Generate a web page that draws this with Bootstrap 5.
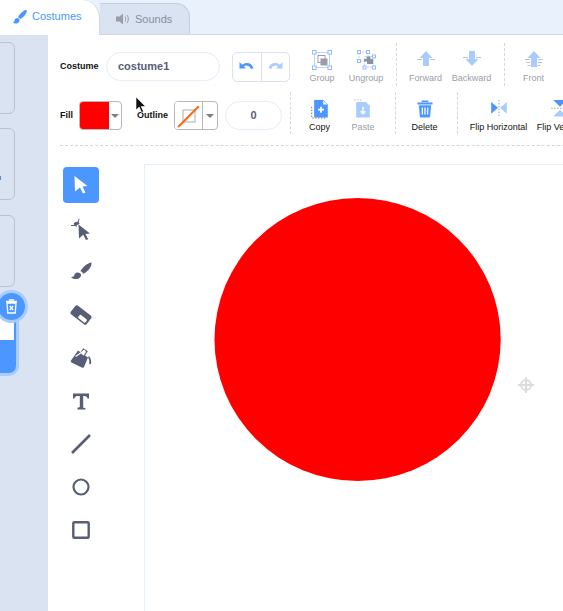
<!DOCTYPE html>
<html lang="en">
<head>
<meta charset="UTF-8">
<meta name="viewport" content="width=device-width, initial-scale=1.0">
<title>Paint editor</title>
<link rel="stylesheet" href="https://cdn.jsdelivr.net/npm/bootstrap@5.3.0/dist/css/bootstrap.min.css">
<style>
    html, body { height: 100%; }
    body { background: #e9f1fc; font-family: "Liberation Sans", Arial, sans-serif; overflow: hidden; position: relative; color: #575e75; }
    .tab-strip { height: 35px; border-bottom: 1px solid #cfd6e2; }
    .tab-item { font-size: 11px; display: flex; align-items: center; gap: 5px; }
    .tab-on { width: 100px; height: 35px; background: #fff; color: #4c97ff; padding: 0 0 2px 13px; border-right: 1px solid #cfd6e2; margin-bottom: -1px; font-weight: 500; border-radius: 0 18px 0 0; }
    .tab-off { width: 90px; height: 31px; margin-top: 3px; background: #d9e3f2; color: #8a8f9c; padding-left: 16px; border: 1px solid #c6cede; border-left: 0; border-bottom: 0; border-radius: 0 14px 0 0; }
    .editor-body { height: 576px; }
    .sprite-rail { width: 48px; background: #d9e3f2; padding-top: 7px; flex: none; overflow: hidden; position: relative; }
    .sprite-box { width: 30px; height: 72px; margin-left: -15px; margin-bottom: 14px; border: 1px solid #bcc3cf; border-radius: 6px; position: relative; }
    .sprite-box + .sprite-box { margin-bottom: 15px; }
    .sprite-box i { position: absolute; right: 13px; top: 47px; width: 2px; height: 4px; background: #5c8fc9; }
    .sprite-sel { width: 31px; height: 73px; margin-left: -15px; margin-top: -2px; background: #4c97ff; border-radius: 7px; box-shadow: 0 0 0 3px #a9ccff; position: relative; }
    .sprite-sel div { height: 40px; background: #fff; margin: 0 2px 0 0; }
    .trash-badge { position: absolute; left: -2px; top: 258px; width: 27px; height: 27px; border-radius: 50%; background: #4c97ff; box-shadow: 0 0 0 3px #a9ccff; display: flex; align-items: center; justify-content: center; }
    .editor-main { background: #fff; flex: 1; min-width: 0; overflow: hidden; padding: 16px 0 0 12px; }
    .bar-row { height: 31px; white-space: nowrap; width: 560px; }
    .bar-row > * { flex: none; }
    .row-low { margin-top: 19px; height: 29px; }
    .bar-label { font-size: 9px; font-weight: 700; color: #111; }
    .lbl-costume { width: 40px; }
    .lbl-fill { width: 19px; }
    .lbl-outline { width: 37px; margin-left: 15px; }
    .name-field { width: 114px; height: 29px; margin-left: 6px; border: 1px solid #e5edf8; border-radius: 15px; font-size: 11px; font-weight: 700; color: #575e75; padding-left: 11px; display: flex; align-items: center; }
    .undo-pair { width: 58px; height: 30px; margin-left: 12px; border: 1px solid #dde3ec; border-radius: 5px; }
    .undo-pair span { flex: 1; display: flex; align-items: center; justify-content: center; }
    .undo-pair span + span { border-left: 1px solid #dde3ec; }
    .cell-btn { font-size: 9px; color: #9a9ea8; display: flex; flex-direction: column; align-items: center; height: 40px; }
    .cell-btn svg { height: 20px; }
    .cell-dark { color: #111; }
    .cell-gap { width: 0; border-left: 1px dashed #d4d7dc; }
    .row-top .cell-btn { margin-top: -1px; }
    .row-top .cell-btn svg { margin-top: 4px; margin-bottom: 2px; }
    .row-low .cell-btn { margin-top: -3px; }
    .row-low .cell-btn svg { margin-top: 5px; margin-bottom: 2px; }
    .row-low .cell-gap { margin-top: -5px; height: 42px; }
    .row-top .cell-gap { margin-top: -5px; height: 43px; }
    .at-group { margin-left: 19px; width: 26px; }
    .at-ungroup { margin-left: 13px; width: 36px; }
    .at-gap-a { margin-left: 12px; }
    .at-forward { margin-left: 11.5px; width: 34px; }
    .at-backward { margin-left: 8.5px; width: 41px; }
    .at-gap-b { margin-left: 11.5px; }
    .at-front { margin-left: 17px; width: 24px; }
    .at-gap-c { margin-left: 8px; }
    .at-copy { margin-left: 18px; width: 21px; }
    .at-paste { margin-left: 21px; width: 24px; }
    .at-gap-d { margin-left: 20px; }
    .at-delete { margin-left: 15.5px; width: 26px; }
    .at-gap-e { margin-left: 19.5px; }
    .at-fliph { margin-left: 11.5px; width: 58px; }
    .at-flipv { margin-left: 9.5px; width: 46px; }
    .swatch-pick { width: 43px; height: 29px; border: 1px solid #b8b8b8; border-radius: 4px; overflow: hidden; }
    .swatch-wide { width: 44px; }
    .swatch-main { width: 29px; background: #f00; }
    .swatch-line { width: 28px; background: #fff; display: flex; align-items: center; justify-content: center; border-right: 1px solid #b8b8b8; }
    .swatch-drop { flex: 1; display: flex; align-items: center; justify-content: center; }
    .width-field { width: 57px; height: 29px; margin-left: 7px; border: 1px solid #e5edf8; border-radius: 15px; font-size: 11px; font-weight: 700; color: #575e75; display: flex; align-items: center; justify-content: center; }
    .bar-rule { width: 560px; border-top: 1px dashed #d4d7dc; margin-top: 15px; }
    .paint-area { margin-top: 18px; }
    .tool-col { width: 36px; margin: 3px 0 0 3px; flex: none; }
    .tool-btn { width: 36px; height: 36px; border-radius: 4px; display: flex; align-items: center; justify-content: center; margin-bottom: 7px; }
    .tool-sel { background: #4c97ff; margin-bottom: 8px; }
    .paint-canvas { margin-left: 45px; border-top: 1px solid #e6eef8; border-left: 1px solid #e6eef8; width: 420px; height: 447px; flex: none; }
    .paint-canvas svg { display: block; }
    .mouse-arrow { position: absolute; left: 135px; top: 96px; }
</style>
</head>
<body>
    <div class="tab-strip d-flex">
        <div class="tab-item tab-on">
            <svg width="14" height="14" viewBox="0 0 14 14"><path d="M13.6.4c-.6-.5-1.600-.4-2.500.2C8.500 2.300 6.300 4.800 5 7.300c1 .2 1.800 1 2 2 2.500-1.300 5.200-3.900 6.400-6.500.4-.9.6-1.800.2-2.400zM4.200 8C2.600 8 1.700 9.200 1.500 10.500 1.300 11.600.8 12 0 12.300c1 1.300 3.300 1.700 5 .6 1.300-.8 1.800-2.100 1.400-3.300C6.100 8.600 5.200 8 4.200 8z" fill="#4c97ff"/></svg>
            <span>Costumes</span>
        </div>
        <div class="tab-item tab-off">
            <svg width="14" height="12" viewBox="0 0 14 12"><path d="M0 3.500h3.500l3.500-3v11l-3.500-3H0z" fill="#9a9ea8"/><path d="M9 3.500c1 1.300 1 3.700 0 5M11 2c1.800 2.200 1.800 5.800 0 8" stroke="#9a9ea8" stroke-width="1" fill="none"/></svg>
            <span>Sounds</span>
        </div>
    </div>
    <div class="editor-body d-flex">
        <div class="sprite-rail">
            <div class="sprite-box"></div>
            <div class="sprite-box"><i></i></div>
            <div class="sprite-box"></div>
            <div class="sprite-sel"><div></div></div>
            <div class="trash-badge">
                <svg width="13" height="15" viewBox="0 0 13 15"><path d="M4.500 1.500V.8h4v.7M1 2.500h11M2 4l.8 10h7.400L11 4z" stroke="#fff" stroke-width="1.300" fill="none"/><path d="M4.800 7l3.400 4M8.200 7l-3.400 4" stroke="#fff" stroke-width="1.200"/></svg>
            </div>
        </div>
        <div class="editor-main">
            <div class="bar-row row-top d-flex align-items-center">
                <span class="bar-label lbl-costume">Costume</span>
                <div class="name-field">costume1</div>
                <div class="undo-pair d-flex">
                    <span><svg width="15" height="11" viewBox="0 0 15 11"><path d="M.5 1v6.500h6.500L4.800 5.300C7 3.800 10.500 4.500 12 8l2.500-.8C13 2 7.500.4 3.200 3.700z" fill="#4c97ff"/></svg></span>
                    <span><svg width="15" height="11" viewBox="0 0 15 11"><path d="M14.500 1v6.500H8l2.200-2.200C8 3.800 4.500 4.500 3 8L.5 7.200C2 2 7.500.4 11.800 3.700z" fill="#a9ccff"/></svg></span>
                </div>
                <div class="cell-btn at-group">
                    <svg width="20" height="20" viewBox="0 0 20 20"><rect x="2.500" y="2.500" width="15" height="15" fill="none" stroke="#b9d5ff"/><g fill="#fff" stroke="#8fbcff"><rect x=".5" y=".5" width="3.500" height="3.500"/><rect x="16" y=".5" width="3.500" height="3.500"/><rect x=".5" y="16" width="3.500" height="3.500"/><rect x="16" y="16" width="3.500" height="3.500"/></g><rect x="6" y="5.500" width="7" height="7" fill="#fff" stroke="#9a9ea8"/><rect x="8.500" y="8.500" width="7" height="7" fill="#9a9ea8"/></svg>
                    Group
                </div>
                <div class="cell-btn at-ungroup">
                    <svg width="19" height="20" viewBox="0 0 19 20"><rect x="2" y="2" width="9" height="9" fill="none" stroke="#b9d5ff" stroke-dasharray="2 1"/><rect x="7.500" y="6.500" width="9" height="10.500" fill="none" stroke="#b9d5ff" stroke-dasharray="2 1"/><g fill="#fff" stroke="#8fbcff"><rect x=".5" y=".5" width="3" height="3"/><rect x="9.500" y=".5" width="3" height="3"/><rect x=".5" y="9.500" width="3" height="3"/><rect x="15.500" y="5" width="3" height="3"/><rect x="15.500" y="16" width="3" height="3"/><rect x="6" y="16" width="3" height="3"/></g><path d="M9.500 6.500h4v2.500h2.500v5h-6v-2.500H7V9h2.500z" fill="#8e929c"/></svg>
                    Ungroup
                </div>
                <div class="cell-gap at-gap-a"></div>
                <div class="cell-btn at-forward">
                    <svg width="20" height="20" viewBox="0 0 20 20"><path d="M10 1l6.500 7H13v8H7V8H3.500z" fill="#a9ccff"/><path d="M1 9.500h5M14 9.500h5" stroke="#bcc1ca" stroke-width="1.200"/></svg>
                    Forward
                </div>
                <div class="cell-btn at-backward">
                    <svg width="20" height="20" viewBox="0 0 20 20"><path d="M10 16l6.500-7H13V1H7v8H3.500z" fill="#a9ccff"/><path d="M1 7.500h5M14 7.500h5" stroke="#bcc1ca" stroke-width="1.200"/></svg>
                    Backward
                </div>
                <div class="cell-gap at-gap-b"></div>
                <div class="cell-btn at-front">
                    <svg width="20" height="20" viewBox="0 0 20 20"><path d="M10 1l6.500 7H13v9H7V8H3.500z" fill="#a9ccff"/><path d="M1 9.500h5M14 9.500h5M2 12.500h4M14 12.500h4M3.500 15.500h3M13.500 15.500h3" stroke="#bcc1ca" stroke-width="1.100"/></svg>
                    Front
                </div>
            </div>
            <div class="bar-row row-low d-flex align-items-center">
                <span class="bar-label lbl-fill">Fill</span>
                <div class="swatch-pick d-flex">
                    <div class="swatch-main"></div>
                    <div class="swatch-drop"><svg width="8" height="4" viewBox="0 0 8 4"><path d="M0 0h8L4 4z" fill="#7c7f88"/></svg></div>
                </div>
                <span class="bar-label lbl-outline">Outline</span>
                <div class="swatch-pick swatch-wide d-flex">
                    <div class="swatch-line"><svg width="24" height="24" viewBox="0 0 22 22"><rect x="5.500" y="5.500" width="11" height="11" fill="#fff" stroke="#b5b5b5"/><path d="M1 21L20 2" stroke="#ff6a1a" stroke-width="2"/></svg></div>
                    <div class="swatch-drop"><svg width="8" height="4" viewBox="0 0 8 4"><path d="M0 0h8L4 4z" fill="#7c7f88"/></svg></div>
                </div>
                <div class="width-field">0</div>
                <div class="cell-gap at-gap-c"></div>
                <div class="cell-btn cell-dark at-copy">
                    <svg width="20" height="20" viewBox="0 0 20 20"><path d="M4 1h9l5 5v13H4z" fill="#4c97ff"/><path d="M13 1l5 5h-5z" fill="#fff" stroke="#4c97ff" stroke-width=".5"/><path d="M8 11h6M11 8v6" stroke="#fff" stroke-width="1.800"/><path d="M1.500 8v11.500H16" stroke="#777" stroke-dasharray="1.500 1.500" fill="none"/></svg>
                    Copy
                </div>
                <div class="cell-btn at-paste">
                    <svg width="20" height="20" viewBox="0 0 20 20"><path d="M3 3h10l4 4v12H3z" fill="#a9ccff"/><path d="M10 8v7M7.500 12.500L10 15l2.500-2.500" stroke="#fff" stroke-width="1.500" fill="none"/><path d="M1 1h9" stroke="#bbb" stroke-dasharray="1.500 1.500"/></svg>
                    Paste
                </div>
                <div class="cell-gap at-gap-d"></div>
                <div class="cell-btn cell-dark at-delete">
                    <svg width="18" height="20" viewBox="0 -1 18 22"><path d="M6 3V1.500h6V3" fill="none" stroke="#4c97ff" stroke-width="1.500"/><path d="M.5 3h17v2.200H.5zM2 6h14l-1.200 12.500c-.1.800-.7 1.500-1.500 1.500H4.700c-.8 0-1.400-.7-1.500-1.500z" fill="#4c97ff"/><path d="M6 8.500v8M9 8.500v8M12 8.500v8" stroke="#fff" stroke-width="1.400"/></svg>
                    Delete
                </div>
                <div class="cell-gap at-gap-e"></div>
                <div class="cell-btn cell-dark at-fliph">
                    <svg width="18" height="20" viewBox="0 0 18 20"><path d="M1 3l7 6-7 6z" fill="#4c97ff"/><path d="M17 3l-7 6 7 6z" fill="#a9ccff"/><path d="M9 1v18" stroke="#9a9ea8" stroke-dasharray="1.500 1.500"/></svg>
                    Flip Horizontal
                </div>
                <div class="cell-btn cell-dark at-flipv">
                    <svg width="20" height="20" viewBox="0 0 20 20"><path d="M3 1l7 7 7-7z" fill="#4c97ff"/><path d="M3 18l7-7 7 7z" fill="#a9ccff"/><path d="M1 9.500h18" stroke="#9a9ea8" stroke-dasharray="1.500 1.500"/></svg>
                    Flip Vertical
                </div>
            </div>
            <div class="bar-rule"></div>
            <div class="paint-area d-flex">
                <div class="tool-col">
                    <div class="tool-btn tool-sel"><svg width="16" height="20" viewBox="0 0 16 20"><path d="M1.500 1l13 10-5 .5 3 6-2.500 1-3-6-5 4z" fill="#fff"/></svg></div>
                    <div class="tool-btn"><svg width="22" height="23" viewBox="0 0 22 23"><path d="M8.500 6.500l11.500 9-4.500.5 2.700 5.200-2.300.8-2.600-5.200-4.300 3.700z" fill="#575e75"/><path d="M1 7.500h4M9 .8L8 4.500" stroke="#575e75"/><path d="M3.500 6c1-2 3-2.500 5-2 .8.8 1 1.500 1 2L7 7l-.5 2z" fill="#575e75"/></svg></div>
                    <div class="tool-btn"><svg width="22" height="20" viewBox="0 0 22 20"><path d="M21.500 .5c-3.800.6-8.500 4-11 8.800 1.300.3 2.200 1.200 2.500 2.500C17.500 10 22 5 21.500 .5zM7.500 10.500c-2 0-3 1.500-3.200 2.800-.2 1-1 1.500-3.300 1.600 1 1.800 5 3 7.500 1.600 2-1 3-2.700 2.500-4-.4-1.200-1.700-2-3.500-2z" fill="#575e75"/></svg></div>
                    <div class="tool-btn"><svg width="22" height="20" viewBox="0 0 22 20"><g transform="rotate(38 11 10)"><rect x="1" y="4.500" width="20" height="11" rx="2" fill="#575e75"/><rect x="10" y="10" width="9" height="4" rx="1" fill="#fff"/></g></svg></div>
                    <div class="tool-btn"><svg width="22" height="21" viewBox="0 0 22 21"><path d="M8 2.500l10 7-4 9.500c-.3.700-1 1-1.700.7L1.500 14.500c-.9-.4-1-1.500-.3-2.200z" fill="#575e75"/><path d="M10.500 5L13.500 1l3.500 2.500-3 4.500" fill="#fff" stroke="#575e75" stroke-width="1.200"/><path d="M5.500 8.500l9.500-6.500" stroke="#fff" stroke-width="1.300"/><path d="M19 8c1.500 2 2.800 5.500 2 7.500-.6 1.400-2.200.5-1.800-.8.400-1.500.1-3-1.200-5.200z" fill="#575e75"/></svg></div>
                    <div class="tool-btn"><svg width="18" height="19" viewBox="0 0 18 18"><path d="M1 1h16v5h-1.500c-.3-1.600-1-2.500-3-2.500h-1.300v10.800c0 1 .5 1.400 2.300 1.500V17H5.500v-1.700c1.800-.1 2.300-.5 2.300-1.500V3.500H5.500c-2 0-2.700.9-3 2.500H1z" fill="#575e75"/></svg></div>
                    <div class="tool-btn"><svg width="20" height="20" viewBox="0 0 20 20"><path d="M1 19L19 1" stroke="#575e75" stroke-width="2.600"/></svg></div>
                    <div class="tool-btn"><svg width="18" height="18" viewBox="0 0 18 18"><circle cx="9" cy="9" r="7.500" fill="#fff" stroke="#575e75" stroke-width="2.200"/></svg></div>
                    <div class="tool-btn"><svg width="18" height="18" viewBox="0 0 18 18"><rect x="1.300" y="1.300" width="15.400" height="15.400" rx="1" fill="#fff" stroke="#575e75" stroke-width="2.400"/></svg></div>
                </div>
                <div class="paint-canvas">
                    <svg width="419" height="446" viewBox="0 0 419 446">
                        <ellipse cx="212.600" cy="174.500" rx="143.100" ry="141.500" fill="#f00"/>
                        <g stroke="#dcdcdc" fill="none" stroke-width="2"><circle cx="381" cy="220" r="5"/><path d="M381 212v16M373 220h16"/></g>
                    </svg>
                </div>
            </div>
        </div>
    </div>
    <svg class="mouse-arrow" width="12" height="18" viewBox="0 0 12 18"><path d="M1 1v13l3.200-3 2.300 5.500 2-1-2.300-5H10.500z" fill="#111" stroke="#fff" stroke-width=".6"/></svg>
    <script src="https://cdn.jsdelivr.net/npm/bootstrap@5.3.0/dist/js/bootstrap.bundle.min.js"></script>
</body>
</html>
